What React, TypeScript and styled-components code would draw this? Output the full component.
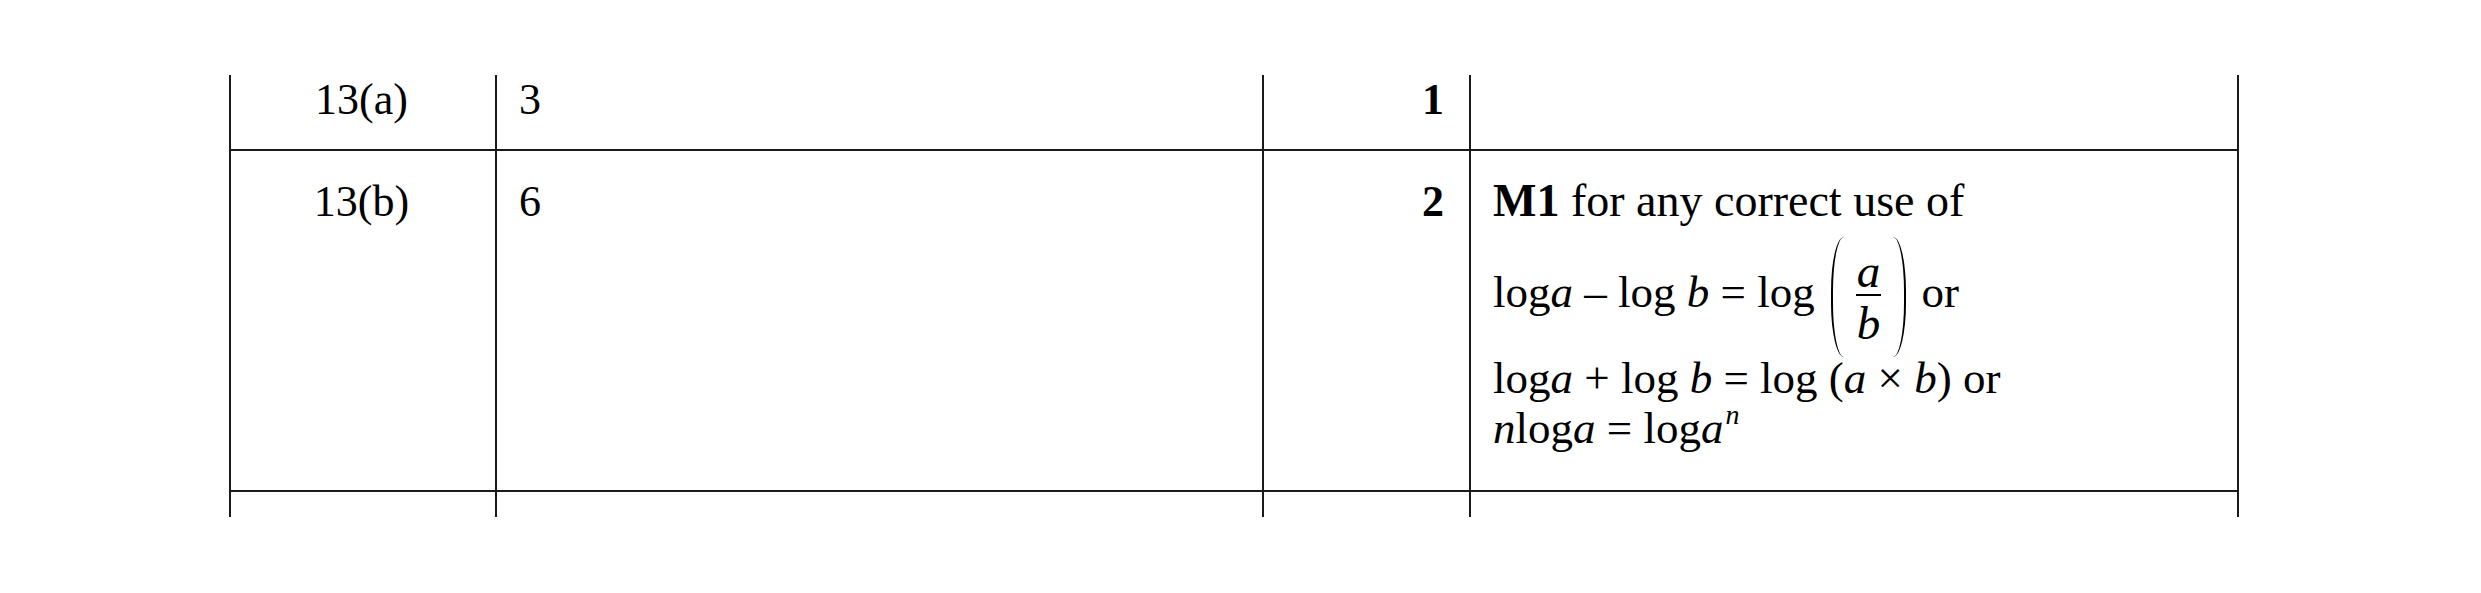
import styled, { createGlobalStyle } from 'styled-components';

const GlobalStyle = createGlobalStyle`
  html, body {
    margin: 0;
    padding: 0;
    background: #fff;
  }
  body {
    font-family: 'Liberation Serif', 'Times New Roman', serif;
    color: #000;
  }
`;

const LINE = '#1a1a1a';

const Page = styled.div`
  width: 2481px;
  height: 593px;
  box-sizing: border-box;
  padding: 75px 0 0 229px;
  background: #fff;
  overflow: hidden;
`;

const Table = styled.div`
  display: grid;
  grid-template-columns: 266px 767px 207px 770px;
  grid-template-rows: 76px 341px 25px;
`;

const Cell = styled.div<{
  $align?: 'left' | 'center' | 'right';
  $last?: boolean;
  $ruled?: boolean;
  $top?: number;
}>`
  box-sizing: border-box;
  border-left: 2px solid ${LINE};
  border-right: ${(p) => (p.$last ? `2px solid ${LINE}` : 'none')};
  border-bottom: ${(p) => (p.$ruled ? `2px solid ${LINE}` : 'none')};
  padding: ${(p) => p.$top ?? 0}px 25px 0 22px;
  text-align: ${(p) => p.$align ?? 'left'};
  font-size: 44px;
  line-height: 50px;
`;

const Mark = styled.span`
  font-weight: 700;
`;

const Note = styled.div<{ $gap?: number }>`
  font-size: 46px;
  line-height: 50px;
  margin-top: ${(p) => p.$gap ?? 0}px;
  white-space: nowrap;
`;

const Maths = styled.div<{ $gap?: number }>`
  font-size: 45px;
  line-height: 50px;
  margin-top: ${(p) => p.$gap ?? 0}px;
  white-space: nowrap;
`;

const V = styled.i`
  font-style: italic;
`;

const Sup = styled.sup`
  font-size: 28px;
  font-style: italic;
  line-height: 0;
  vertical-align: 19px;
  margin-left: 2px;
`;

const Bracket = styled.span`
  display: inline-flex;
  align-items: stretch;
  height: 120px;
  vertical-align: middle;
  margin: 0 4px 0 16px;
`;

const Paren = styled.span<{ $side: 'left' | 'right' }>`
  width: 13px;
  box-sizing: border-box;
  ${(p) =>
    p.$side === 'left'
      ? `border-left: 2px solid #000;
         border-top-left-radius: 100% 45%;
         border-bottom-left-radius: 100% 45%;`
      : `border-right: 2px solid #000;
         border-top-right-radius: 100% 45%;
         border-bottom-right-radius: 100% 45%;`}
`;

const Frac = styled.span`
  display: inline-flex;
  flex-direction: column;
  justify-content: center;
  align-items: center;
  padding: 0 12px;
`;

const Part = styled.span<{ $shift?: number }>`
  display: block;
  font-style: italic;
  font-size: 47px;
  line-height: 46px;
  height: 46px;
  padding: 0 1px;
  margin-top: ${(p) => p.$shift ?? 0}px;
`;

const Bar = styled.span`
  display: block;
  align-self: stretch;
  height: 2px;
  background: #000;
`;

export default function App() {
  return (
    <>
      <GlobalStyle />
      <Page>
        <Table>
          <Cell $align="center" $ruled>13(a)</Cell>
          <Cell $ruled>3</Cell>
          <Cell $align="right" $ruled>
            <Mark>1</Mark>
          </Cell>
          <Cell $ruled $last />

          <Cell $align="center" $ruled $top={26}>13(b)</Cell>
          <Cell $ruled $top={26}>6</Cell>
          <Cell $align="right" $ruled $top={26}>
            <Mark>2</Mark>
          </Cell>
          <Cell $ruled $last $top={25}>
            <Note>
              <Mark>M1</Mark> for any correct use of
            </Note>
            <Maths $gap={11}>
              log<V>a</V> – log <V>b</V> = log
              <Bracket>
                <Paren $side="left" />
                <Frac>
                  <Part>a</Part>
                  <Bar />
                  <Part $shift={4}>b</Part>
                </Frac>
                <Paren $side="right" />
              </Bracket>
              {' '}or
            </Maths>
            <Maths $gap={-4}>
              log<V>a</V> + log <V>b</V> = log (<V>a</V> × <V>b</V>) or
            </Maths>
            <Maths>
              <V>n</V>log<V>a</V> = log<V>a</V>
              <Sup>n</Sup>
            </Maths>
          </Cell>

          <Cell />
          <Cell />
          <Cell />
          <Cell $last />
        </Table>
      </Page>
    </>
  );
}
